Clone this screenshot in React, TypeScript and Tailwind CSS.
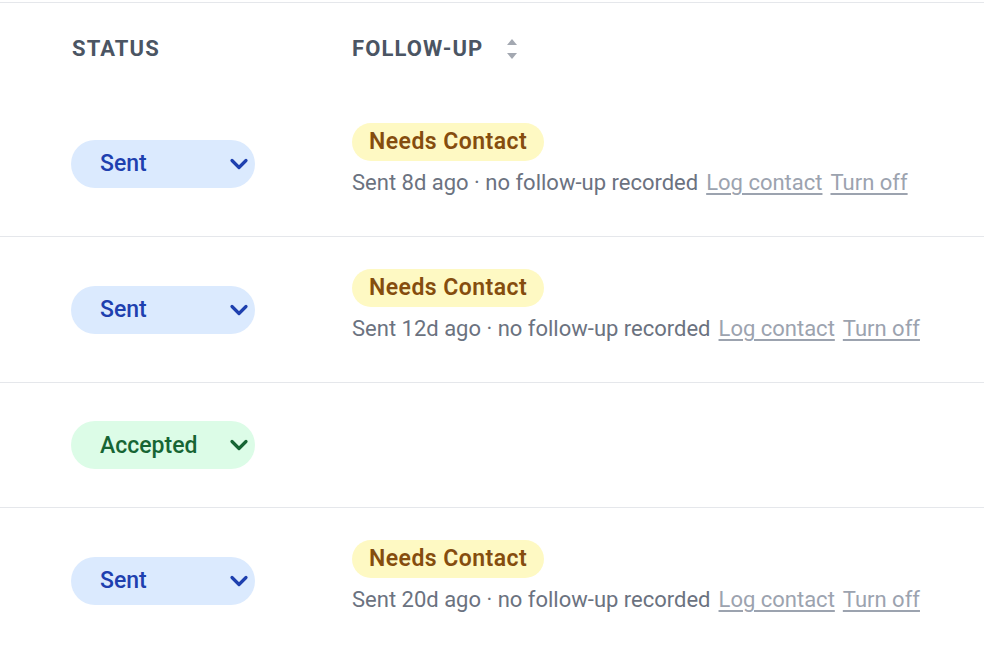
import React from "react";

type Row = {
  status: "Sent" | "Accepted";
  sentAgo?: string;
};

const rows: Row[] = [
  { status: "Sent", sentAgo: "8d" },
  { status: "Sent", sentAgo: "12d" },
  { status: "Accepted" },
  { status: "Sent", sentAgo: "20d" },
];

function Chevron() {
  return (
    <svg className="w-[20px] h-[14px]" viewBox="0 0 20 14" fill="none" stroke="currentColor">
      <path d="M3 3.5l7 7 7-7" strokeWidth={3.2} strokeLinecap="round" strokeLinejoin="round" />
    </svg>
  );
}

function SortIcon() {
  return (
    <svg className="w-[12px] h-[26px] ml-[23px]" viewBox="0 0 12 26" fill="#a3a8b1">
      <path d="M6 3l5 6H1z" />
      <path d="M6 23l5-6H1z" />
    </svg>
  );
}

function StatusPill({ status }: { status: Row["status"] }) {
  const sent = status === "Sent";
  return (
    <div
      className={
        sent
          ? "w-[184px] h-[48px] rounded-full bg-[#dbeafe] text-[#1e40af] flex items-center justify-between pl-[29px] pr-[6px]"
          : "w-[184px] h-[48px] rounded-full bg-[#dcfce7] text-[#166534] flex items-center justify-between pl-[29px] pr-[6px]"
      }
    >
      <span className="text-[23px] font-medium leading-none">{status}</span>
      <Chevron />
    </div>
  );
}

export default function App() {
  return (
    <div className="bg-white min-h-screen pt-[2px]" style={{ fontFamily: "Roboto, 'Noto Sans', sans-serif" }}>
      <div className="border-t-[1.5px] border-[#e5e7eb]">
        <div className="grid grid-cols-[352px_1fr] h-[88px] pt-[3px] items-center">
          <div className="pl-[72px] text-[22px] font-bold text-[#4b5563] tracking-wider">STATUS</div>
          <div className="flex items-center text-[22px] font-bold text-[#4b5563] tracking-wider">
            FOLLOW-UP
            <SortIcon />
          </div>
        </div>
        {rows.map((row, i) => (
          <div
            key={i}
            className={
              i < rows.length - 1
                ? "grid grid-cols-[352px_1fr] border-b-[1.5px] border-[#e5e7eb]"
                : "grid grid-cols-[352px_1fr]"
            }
          >
            <div className="pl-[71px] py-[38px] flex items-center">
              <StatusPill status={row.status} />
            </div>
            <div className="py-[32px]">
              {row.sentAgo && (
                <div className="pb-[6px]">
                  <span className="inline-flex items-center h-[38px] px-[17px] rounded-full bg-[#fef9c3] text-[#854d0e] text-[23px] font-semibold tracking-[0.02em]">
                    Needs Contact
                  </span>
                  <div className="mt-[7px] flex items-center gap-[9px] text-[22px] leading-[30px] text-[#6b7280]">
                    <span>Sent {row.sentAgo} ago · no follow-up recorded</span>
                    <span className="underline underline-offset-[3px] text-[#9ca3af] -ml-[1px]">Log contact</span>
                    <span className="underline underline-offset-[3px] text-[#9ca3af] -ml-[1px]">Turn off</span>
                  </div>
                </div>
              )}
            </div>
          </div>
        ))}
      </div>
    </div>
  );
}
